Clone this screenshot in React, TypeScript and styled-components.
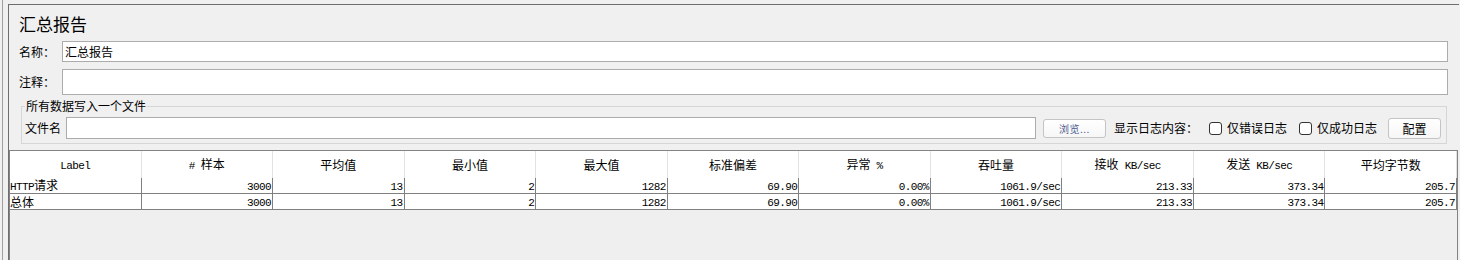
import styled, { createGlobalStyle } from "styled-components";

const GlobalStyle = createGlobalStyle`
  html, body {
    margin: 0;
    padding: 0;
    background: #f0f0f0;
  }
  body {
    width: 1460px;
    height: 260px;
    overflow: hidden;
    font-family: "Noto Sans CJK SC", "Liberation Sans", sans-serif;
    font-size: 12px;
    color: #000;
  }
`;

const Frame = styled.div`
  display: flex;
  height: 260px;
`;

const Gutter = styled.div`
  flex: none;
  width: 5px;
  margin-left: 2px;
  border-left: 1px solid #a0a0a0;
`;

const Panel = styled.div`
  flex: 1;
  display: flex;
  flex-direction: column;
  margin: 4px 1px 0 0;
  border-top: 1px solid #6e6e6e;
  border-left: 1px solid #6e6e6e;
  min-width: 0;
`;

const FormArea = styled.div`
  display: flex;
  flex-direction: column;
  padding: 8px 11px 0 10px;
`;

const Title = styled.div`
  font-size: 17px;
  line-height: 22px;
  height: 22px;
  margin-bottom: 6px;
`;

const FieldRow = styled.div<{ $h: number; $mb?: number }>`
  display: grid;
  grid-template-columns: 43px 1fr;
  align-items: center;
  height: ${(p) => p.$h}px;
  margin-bottom: ${(p) => p.$mb ?? 0}px;
`;

const FieldLabel = styled.span`
  line-height: 16px;
  white-space: nowrap;
`;

const TextBox = styled.div<{ $h: number }>`
  box-sizing: border-box;
  height: ${(p) => p.$h}px;
  background: #fff;
  border: 1px solid #acacac;
  padding: 0 2px;
  line-height: ${(p) => p.$h - 2}px;
  white-space: nowrap;
  overflow: hidden;
`;

const FileSet = styled.fieldset`
  margin: 4px 1px 0 2px;
  padding: 0 5px 4px 3px;
  border: 1px solid #d6d6d6;
  min-width: 0;
`;

const Legend = styled.legend`
  padding: 0 1px;
  line-height: 14px;
  font-size: 12px;
`;

const FileRow = styled.div`
  display: flex;
  align-items: center;
  height: 22px;
  margin-top: 4px;
  white-space: nowrap;
`;

const FileInput = styled.div`
  flex: 1;
  box-sizing: border-box;
  height: 22px;
  margin-left: 5px;
  background: #fff;
  border: 1px solid #acacac;
`;

const SmallButton = styled.div<{ $w: number; $h: number; $ml: number }>`
  flex: none;
  box-sizing: border-box;
  width: ${(p) => p.$w}px;
  height: ${(p) => p.$h}px;
  margin-left: ${(p) => p.$ml}px;
  border: 1px solid #c4c4c4;
  border-radius: 3px;
  background: linear-gradient(#ffffff, #f6f6f6);
  display: flex;
  align-items: center;
  justify-content: center;
`;

const BrowseText = styled.span`
  font-size: 10px;
  color: #4f5b92;
  letter-spacing: 0.5px;
`;

const Text = styled.span<{ $ml?: number }>`
  margin-left: ${(p) => p.$ml ?? 0}px;
  line-height: 16px;
`;

const Check = styled.span<{ $ml: number }>`
  flex: none;
  box-sizing: border-box;
  width: 13px;
  height: 13px;
  margin-left: ${(p) => p.$ml}px;
  margin-right: 5px;
  border: 1px solid #333;
  border-radius: 3px;
  background: #fff;
`;

const TablePane = styled.div`
  flex: 1;
  margin: 6px 1px 0 0;
  border: 1px solid #838383;
  border-bottom: none;
  background: #efefef;
`;

const Grid = styled.div`
  display: grid;
  grid-template-columns: repeat(11, 1fr);
`;

const HeadCell = styled.div`
  height: 27px;
  background: #fff;
  border-right: 1px solid #e2e2e2;
  display: flex;
  align-items: center;
  justify-content: center;
  white-space: nowrap;
  &:last-child {
    border-right: none;
  }
`;

const Cell = styled.div<{ $left?: boolean }>`
  height: 15px;
  background: #fff;
  border-right: 1px solid #808080;
  border-bottom: 1px solid #808080;
  display: flex;
  align-items: center;
  justify-content: ${(p) => (p.$left ? "flex-start" : "flex-end")};
  padding: 0 1px 0 0;
  white-space: nowrap;
`;

const Line = styled.span`
  line-height: 14px;
`;

const Mono = styled.span`
  font-family: "Liberation Mono", "DejaVu Sans Mono", monospace;
  font-size: 11px;
  letter-spacing: -0.6px;
`;

const headers = [
  "Label",
  "# 样本",
  "平均值",
  "最小值",
  "最大值",
  "标准偏差",
  "异常 %",
  "吞吐量",
  "接收 KB/sec",
  "发送 KB/sec",
  "平均字节数",
];

const rows = [
  ["HTTP请求", "3000", "13", "2", "1282", "69.90", "0.00%", "1061.9/sec", "213.33", "373.34", "205.7"],
  ["总体", "3000", "13", "2", "1282", "69.90", "0.00%", "1061.9/sec", "213.33", "373.34", "205.7"],
];

// split text into CJK runs and ascii runs so ascii gets the narrow mono face
const Mixed = ({ text }: { text: string }) => {
  const parts = text.match(/[\x00-\x7f]+|[^\x00-\x7f]+/g) ?? [];
  return (
    <Line>
      {parts.map((p, i) =>
        /^[\x00-\x7f]+$/.test(p) ? <Mono key={i}>{p.replace(/ /g, "\u00a0")}</Mono> : <span key={i}>{p}</span>
      )}
    </Line>
  );
};

export default function App() {
  return (
    <>
      <GlobalStyle />
      <Frame>
        <Gutter />
        <Panel>
          <FormArea>
            <Title>汇总报告</Title>
            <FieldRow $h={21} $mb={7}>
              <FieldLabel>名称：</FieldLabel>
              <TextBox $h={21}>汇总报告</TextBox>
            </FieldRow>
            <FieldRow $h={26}>
              <FieldLabel>注释：</FieldLabel>
              <TextBox $h={26} />
            </FieldRow>
            <FileSet>
              <Legend>所有数据写入一个文件</Legend>
              <FileRow>
                <Text>文件名</Text>
                <FileInput />
                <SmallButton $w={63} $h={19} $ml={7}>
                  <BrowseText>浏览...</BrowseText>
                </SmallButton>
                <Text $ml={8}>显示日志内容：</Text>
                <Check $ml={11} />
                <Text>仅错误日志</Text>
                <Check $ml={12} />
                <Text>仅成功日志</Text>
                <SmallButton $w={53} $h={21} $ml={11}>
                  配置
                </SmallButton>
              </FileRow>
            </FileSet>
          </FormArea>
          <TablePane>
            <Grid>
              {headers.map((h, i) => (
                <HeadCell key={i}>
                  <Mixed text={h} />
                </HeadCell>
              ))}
              {rows.map((r, ri) =>
                r.map((v, ci) => (
                  <Cell key={`${ri}-${ci}`} $left={ci === 0}>
                    <Mixed text={v} />
                  </Cell>
                ))
              )}
            </Grid>
          </TablePane>
        </Panel>
      </Frame>
    </>
  );
}
